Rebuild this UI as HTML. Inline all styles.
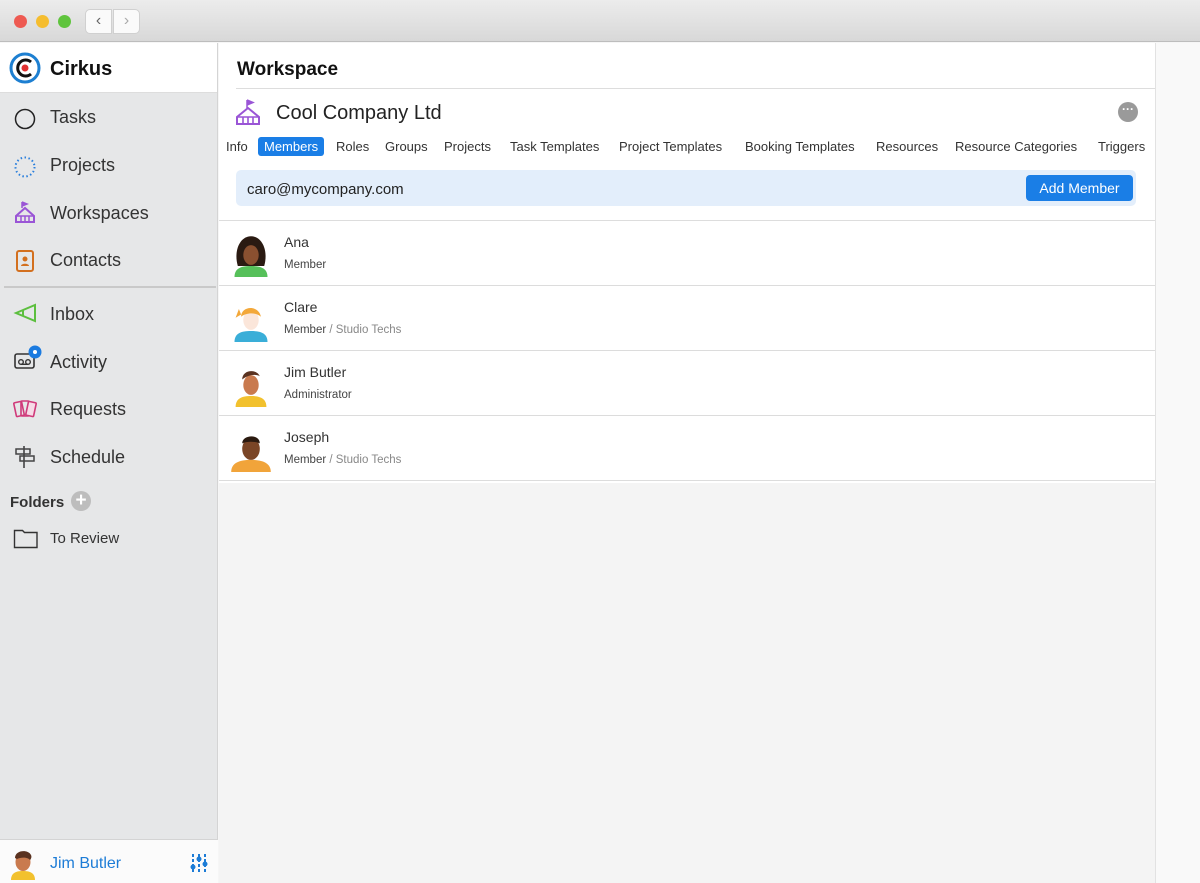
<!DOCTYPE html>
<html><head><meta charset="utf-8"><style>
*{margin:0;padding:0;box-sizing:border-box}
body{width:1200px;height:883px;overflow:hidden;font-family:"Liberation Sans",Arial,sans-serif;background:#f6f6f6;position:relative;color:#222}
.tb{position:absolute;left:0;top:0;width:1200px;height:42px;background:linear-gradient(#ececec,#d8d8d8);border-bottom:1px solid #bdbdbd}
.dot{position:absolute;top:15px;width:13px;height:13px;border-radius:50%}
.nav{position:absolute;top:9px;height:25px;width:27px;background:#fafafa;border:1px solid #d0d0d0;font-size:16px;color:#666;text-align:center;line-height:22px}
.sb{position:absolute;left:0;top:43px;width:218px;height:840px;background:#e6e7e8;border-right:1px solid #d4d4d4}
.sbh{height:50px;background:#fff;border-bottom:1px solid #ddd;position:relative}
.it{position:absolute;left:50px;font-size:18px;color:#333}
.ic{position:absolute;left:13px}
.main{position:absolute;left:219px;top:43px;width:936px;height:840px;background:#f4f4f4}
.right{position:absolute;left:1155px;top:43px;width:45px;height:840px;background:#f9f9f9;border-left:1px solid #e2e2e2}
.tabs span{position:absolute;top:96px;font-size:13px;color:#333}
.row{position:absolute;left:0;width:936px;height:65px;background:#fff;border-bottom:1px solid #dcdcdc}
.row .n{position:absolute;left:65px;top:13px;font-size:14px;color:#333}
.row .r{position:absolute;left:65px;top:38px;font-size:11.5px;color:#444}
.row .r i{font-style:normal;color:#888}
.av{position:absolute;left:12px;top:12px;width:40px;height:44px}
</style></head><body>
<div class="tb">
<div class="dot" style="left:14px;background:#ee5a52"></div>
<div class="dot" style="left:36px;background:#f5bd2f"></div>
<div class="dot" style="left:58px;background:#5fc43d"></div>
<div class="nav" style="left:85px;border-radius:5px 0 0 5px">&#8249;</div>
<div class="nav" style="left:113px;border-radius:0 5px 5px 0;color:#aaa">&#8250;</div>
</div>
<div class="sb">
<div class="sbh">
<svg style="position:absolute;left:9px;top:9px" width="32" height="32"><circle cx="16" cy="16" r="14" fill="#fff" stroke="#1d7fd1" stroke-width="3"/><path d="M22 10a8 8 0 1 0 0 12" fill="none" stroke="#111" stroke-width="3"/><circle cx="16" cy="16" r="3.5" fill="#e03030"/></svg>
<div style="position:absolute;left:50px;top:15px;font-size:20px;font-weight:bold;color:#111">Cirkus</div>
</div>
<svg class="ic" style="top:64px" width="24" height="24"><circle cx="12" cy="12" r="9.5" fill="none" stroke="#222" stroke-width="1.5"/></svg><div class="it" style="top:64px">Tasks</div>
<svg class="ic" style="top:112px" width="24" height="24"><circle cx="12" cy="12" r="9.5" fill="none" stroke="#2a7fdc" stroke-width="2" stroke-dasharray="1.5 2.5"/></svg><div class="it" style="top:112px">Projects</div>
<svg class="ic" style="top:157px" width="24" height="26"><path d="M9 2v6M9 2l5 2-5 2" stroke="#9a55d6" fill="#9a55d6" stroke-width="1.5"/><path d="M3 22V16L12 8l9 8v6z" fill="none" stroke="#9a55d6" stroke-width="2"/><path d="M3 16h18M8 22v-6M12 22v-6M16 22v-6" stroke="#9a55d6" stroke-width="1.5"/></svg><div class="it" style="top:160px">Workspaces</div>
<svg class="ic" style="top:206px" width="24" height="24"><rect x="4" y="2" width="16" height="20" rx="2" fill="none" stroke="#d3701f" stroke-width="2"/><circle cx="12" cy="10" r="2.5" fill="#d3701f"/><path d="M8 17c0-3 8-3 8 0z" fill="#d3701f"/></svg><div class="it" style="top:207px">Contacts</div>
<div style="position:absolute;left:4px;top:243px;width:212px;height:2px;background:#c9c9c9"></div>
<svg class="ic" style="top:258px" width="26" height="24"><path d="M3 12l19-8v16z" fill="none" stroke="#5cbf3e" stroke-width="2"/><path d="M10 9v6" stroke="#5cbf3e" stroke-width="2"/></svg><div class="it" style="top:261px">Inbox</div>
<svg class="ic" style="top:300px" width="32" height="30"><rect x="2" y="11" width="19" height="14" rx="2" fill="none" stroke="#333" stroke-width="1.6"/><circle cx="8" cy="19" r="2.3" fill="none" stroke="#333" stroke-width="1.4"/><circle cx="15" cy="19" r="2.3" fill="none" stroke="#333" stroke-width="1.4"/><path d="M8 21.3h7" stroke="#333" stroke-width="1.4"/><circle cx="22" cy="9" r="6.5" fill="#1b7be0"/><circle cx="22" cy="9" r="2" fill="#fff"/></svg><div class="it" style="top:309px">Activity</div>
<svg class="ic" style="top:354px" width="26" height="24"><rect x="2" y="5" width="8" height="14" rx="1" transform="rotate(-12 6 12)" fill="none" stroke="#d03a7a" stroke-width="1.6"/><rect x="8" y="4" width="8" height="15" rx="1" fill="none" stroke="#d03a7a" stroke-width="1.6"/><rect x="14" y="5" width="8" height="14" rx="1" transform="rotate(12 18 12)" fill="#f7dbe7" stroke="#d03a7a" stroke-width="1.6"/></svg><div class="it" style="top:356px">Requests</div>
<svg class="ic" style="top:401px" width="24" height="26"><path d="M11 2v22" stroke="#444" stroke-width="1.6"/><rect x="3" y="5" width="14" height="5" fill="none" stroke="#444" stroke-width="1.5"/><rect x="7" y="12" width="14" height="5" fill="none" stroke="#444" stroke-width="1.5"/></svg><div class="it" style="top:404px">Schedule</div>
<div style="position:absolute;left:10px;top:451px;font-size:15px;font-weight:bold;color:#333">Folders</div>
<div style="position:absolute;left:71px;top:448px;width:20px;height:20px;border-radius:50%;background:#bdbdbd;color:#fff;font-size:19px;line-height:19px;text-align:center;font-weight:bold">+</div>
<svg class="ic" style="top:484px" width="26" height="22"><path d="M1.5 3.5h8l2 2h12.5v15H1.5z" fill="none" stroke="#333" stroke-width="1.4"/></svg><div class="it" style="top:487px;font-size:15px">To Review</div>
<div style="position:absolute;left:0;top:796px;width:218px;height:44px;background:#fbfbfb;border-top:1px solid #d4d4d4">
<svg style="position:absolute;left:8px;top:4px" width="30" height="36"><path d="M3 36c0-7 5-9 12-9s12 2 12 9z" fill="#f2c12e"/><ellipse cx="15" cy="18" rx="7.5" ry="9" fill="#c97a4e"/><path d="M7 14c0-8 13-9 16-3 1 2 0 4-1 5-2-3-9-3-13-1z" fill="#5a3220"/></svg>
<div style="position:absolute;left:50px;top:15px;font-size:16px;color:#1d7cd6">Jim Butler</div>
<svg style="position:absolute;left:190px;top:12px" width="18" height="22"><path d="M3 2v18M9 2v18M15 2v18" stroke="#1d7cd6" stroke-width="2" stroke-dasharray="3 2"/><circle cx="3" cy="15" r="2.5" fill="#1d7cd6"/><circle cx="9" cy="7" r="2.5" fill="#1d7cd6"/><circle cx="15" cy="12" r="2.5" fill="#1d7cd6"/></svg>
</div>
</div>
<div class="main">
<div style="position:absolute;left:0;top:0;width:936px;height:440px;background:#fff"></div>
<div style="position:absolute;left:18px;top:16px;font-size:19px;font-weight:bold;color:#111">Workspace</div>
<div style="position:absolute;left:17px;top:45px;width:919px;height:1px;background:#ddd"></div>
<svg style="position:absolute;left:15px;top:55px" width="28" height="30"><path d="M13 2v8M13 2l6 2.5-6 2.5" stroke="#9a55d6" fill="#9a55d6" stroke-width="1.5"/><path d="M3 26V19L14 10l11 9v7z" fill="none" stroke="#9a55d6" stroke-width="2"/><path d="M3 19h22M9 26v-7M14 26v-7M19 26v-7" stroke="#9a55d6" stroke-width="1.6"/></svg>
<div style="position:absolute;left:57px;top:59px;font-size:20px;color:#222">Cool Company Ltd</div>
<div style="position:absolute;left:899px;top:59px;width:20px;height:20px;border-radius:50%;background:#9a9a9a;color:#fff;font-size:12px;line-height:15px;text-align:center;font-weight:bold">···</div>
<div class="tabs">
<span style="left:7px">Info</span>
<span style="left:39px;top:94px;background:#1a7ee6;color:#fff;padding:2px 6px;border-radius:3px">Members</span>
<span style="left:117px">Roles</span><span style="left:166px">Groups</span><span style="left:225px">Projects</span><span style="left:291px">Task Templates</span><span style="left:400px">Project Templates</span><span style="left:526px">Booking Templates</span><span style="left:657px">Resources</span><span style="left:736px">Resource Categories</span><span style="left:879px">Triggers</span>
</div>
<div style="position:absolute;left:17px;top:127px;width:900px;height:36px;background:#e3eefb;border-radius:5px">
<div style="position:absolute;left:11px;top:11px;font-size:15px;color:#222">caro@mycompany.com</div>
<div style="position:absolute;left:790px;top:5px;width:107px;height:26px;background:#1a7ee6;border-radius:4px;color:#fff;font-size:14px;text-align:center;line-height:26px">Add Member</div>
</div>
<div style="position:absolute;left:0;top:177px;width:936px;height:1px;background:#ddd"></div>
<div class="row" style="top:178px"><svg class="av" viewBox="0 0 36 40"><path d="M3 40c0-8 6-10 15-10s15 2 15 10z" fill="#56c05a"/><path d="M6 30c-4-14 2-27 12-27s16 13 12 27z" fill="#2a1a12"/><ellipse cx="18" cy="20" rx="7" ry="9" fill="#8a5030"/></svg><div class="n">Ana</div><div class="r">Member</div></div>
<div class="row" style="top:243px"><svg class="av" viewBox="0 0 36 40"><path d="M3 40c0-8 6-10 15-10s15 2 15 10z" fill="#3aaed8"/><ellipse cx="18" cy="20" rx="7" ry="9" fill="#fbe6da"/><path d="M9 17c0-10 16-11 18 0-4-4-13-4-18 0zM7 10l-3 8 5-3z" fill="#f3a83a"/></svg><div class="n">Clare</div><div class="r">Member <i>/ Studio Techs</i></div></div>
<div class="row" style="top:308px"><svg class="av" viewBox="0 0 36 40"><path d="M4 40c0-8 6-10 14-10s14 2 14 10z" fill="#f2c12e"/><ellipse cx="18" cy="20" rx="7" ry="9" fill="#c97a4e"/><path d="M10 15c0-9 13-10 16-3-3-2-10-2-16 3z" fill="#5a3220"/></svg><div class="n">Jim Butler</div><div class="r">Administrator</div></div>
<div class="row" style="top:373px"><svg class="av" viewBox="0 0 36 40"><path d="M0 40c0-8 7-11 18-11s18 3 18 11z" fill="#f1a43a"/><ellipse cx="18" cy="19" rx="8" ry="10" fill="#7a4526"/><path d="M10 14c0-8 16-9 16 0-4-2-12-2-16 0z" fill="#2b1a10"/></svg><div class="n">Joseph</div><div class="r">Member <i>/ Studio Techs</i></div></div>
</div>
<div class="right"></div>
</body></html>
